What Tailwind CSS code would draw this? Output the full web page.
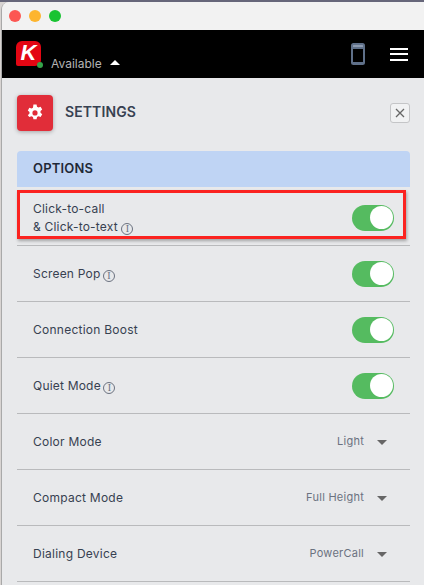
<!DOCTYPE html>
<html>
<head>
<meta charset="utf-8">
<script src="https://cdn.jsdelivr.net/npm/@tailwindcss/browser@4"></script>
</head>
<body class="bg-[#d8d4d2]">
<div class="w-[424px] h-[585px] overflow-hidden font-['Inter',sans-serif] border-t-2 border-[#66667a] ">
<div class="h-full ml-px border-l border-[#a9a9a9] flex flex-col bg-[#e8e9eb] rounded-tl-[8px] overflow-hidden">
  <div class="h-[28px] shrink-0 bg-[#f2f2f2] flex items-center gap-2 pl-[7px]">
    <span class="w-3 h-3 rounded-full bg-[#fc5753]"></span>
    <span class="w-3 h-3 rounded-full bg-[#fdb52f]"></span>
    <span class="w-3 h-3 rounded-full bg-[#19c332]"></span>
  </div>
  <div class="h-[48px] shrink-0 bg-black flex items-center relative pl-[14px] pr-[15px]">
    <div class="relative w-[25px] h-[25px] rounded-[6px] rounded-bl-[2px] bg-[#e30613] flex items-center justify-center -mt-[2px]">
      <span class="text-white font-['Liberation_Sans',sans-serif] font-bold italic text-[22px] leading-none">K</span>
      <span class="absolute -right-[2px] -bottom-[2px] w-[6px] h-[6px] rounded-full bg-[#35a24a] "></span>
    </div>
    <span class="ml-[10px] mt-[20px] text-[12px] leading-none text-[#b4b4b4]">Available</span>
    <svg class="ml-[8px] mt-[16px]" width="10" height="5" viewBox="0 0 10 5"><path d="M5 0 L10 5 L0 5 Z" fill="#fff"/></svg>
    <svg class="ml-auto mr-[25px]" width="14" height="22" viewBox="0 0 14 22"><rect x="0" y="0" width="14" height="22" rx="2.5" fill="#5f7089"/><rect x="2" y="6" width="10" height="13" fill="#000"/><rect x="2" y="2" width="10" height="2" rx="0.5" fill="#8d9bb0"/></svg>
    <div class="flex flex-col gap-[3.5px] mr-[1px]">
      <span class="block w-[18px] h-[2px] bg-white"></span>
      <span class="block w-[18px] h-[2px] bg-white"></span>
      <span class="block w-[18px] h-[2px] bg-white"></span>
    </div>
  </div>
  <div class="flex-1 pl-[15px] pr-[14px] relative">
    <div class="h-[73px] flex items-center relative pb-[3px]">
      <div class="w-9 h-9 rounded-[4px] bg-[#e12d39] shadow-[0_1px_4px_rgba(0,0,0,0.3)] flex items-center justify-center">
        <svg width="18" height="18" viewBox="0 0 16 16"><path fill="#fff" fill-rule="evenodd" d="M6.6 0.5h2.8l.4 2 1.3.7 1.9-.7 1.4 2.4-1.5 1.4v1.4l1.5 1.4-1.4 2.4-1.9-.7-1.3.7-.4 2H6.6l-.4-2-1.3-.7-1.9.7L1.6 9.9l1.5-1.4V7.1L1.6 5.7 3 3.3l1.9.7 1.3-.7zM8 5.6a2.3 2.3 0 1 0 0 4.6 2.3 2.3 0 0 0 0-4.6z"/></svg>
      </div>
      <span class="ml-3 text-[14px] font-semibold text-[#374151] -mt-[3px] tracking-[0.1px]">SETTINGS</span>
      <div class="ml-auto -mt-[1px] w-5 h-5 rounded-[3px] bg-[#f1f2f3] border border-[#c4c5c7] flex items-center justify-center">
        <svg width="10" height="10" viewBox="0 0 10 10"><path d="M1 1 L9 9 M9 1 L1 9" stroke="#666" stroke-width="1.3"/></svg>
      </div>
    </div>
    <div class="h-[36px] rounded-t-[4px] bg-[#bfd4f4] flex items-center pl-4 text-[13px] font-semibold text-[#1f2937] tracking-[0.2px]">OPTIONS</div>

    <div class="h-[59px] border-b border-[#b9babc] flex items-center justify-between pl-4 pr-4 relative">
      <span class="text-[12px] leading-[18px] text-[#374151] mt-[3px] tracking-[0.2px]">Click-to-call<br>&amp; Click-to-text <span class="inline-block align-[-1px] w-3 h-3 rounded-full border border-[#6b7280] text-[10px] leading-[10px] text-center text-[#6b7280] font-['Liberation_Serif',serif]">I</span></span>
      <span class="w-[42px] h-[26px] rounded-full bg-[#55bb60] flex items-center justify-end pr-[1px] mt-[3px]"><span class="w-[23px] h-[23px] rounded-full bg-white"></span></span>
      <div class="absolute left-0 right-[4px] top-[3px] h-[49px] border-[3px] border-[#fb2320] shadow-[1px_2px_3px_rgba(0,0,0,0.3)]"></div>
    </div>

    <div class="h-[56px] border-b border-[#b9babc] flex items-center justify-between pl-4 pr-4">
      <span class="text-[12px] text-[#374151] tracking-[0.2px]">Screen Pop <span class="inline-block align-[-1px] -ml-[1px] w-3 h-3 rounded-full border border-[#6b7280] text-[10px] leading-[10px] text-center text-[#6b7280] font-['Liberation_Serif',serif]">I</span></span>
      <span class="w-[42px] h-[26px] rounded-full bg-[#55bb60] flex items-center justify-end pr-[1px]"><span class="w-[23px] h-[23px] rounded-full bg-white"></span></span>
    </div>
    <div class="h-[56px] border-b border-[#b9babc] flex items-center justify-between pl-4 pr-4">
      <span class="text-[12px] text-[#374151] tracking-[0.25px]">Connection Boost</span>
      <span class="w-[42px] h-[26px] rounded-full bg-[#55bb60] flex items-center justify-end pr-[1px]"><span class="w-[23px] h-[23px] rounded-full bg-white"></span></span>
    </div>
    <div class="h-[56px] border-b border-[#b9babc] flex items-center justify-between pl-4 pr-4">
      <span class="text-[12px] text-[#374151] tracking-[0.2px]">Quiet Mode <span class="inline-block align-[-1px] -ml-[1px] w-3 h-3 rounded-full border border-[#6b7280] text-[10px] leading-[10px] text-center text-[#6b7280] font-['Liberation_Serif',serif]">I</span></span>
      <span class="w-[42px] h-[26px] rounded-full bg-[#55bb60] flex items-center justify-end pr-[1px]"><span class="w-[23px] h-[23px] rounded-full bg-white"></span></span>
    </div>
    <div class="h-[56px] border-b border-[#b9babc] flex items-center pl-4 pr-[23px]">
      <span class="text-[12px] text-[#374151] tracking-[0.25px]">Color Mode</span>
      <span class="ml-auto text-[11px] text-[#6b7280] tracking-[0.25px]">Light</span>
      <svg class="ml-[13px] mt-[1px]" width="10" height="5" viewBox="0 0 10 5"><path d="M0 0 L10 0 L5 5 Z" fill="#666"/></svg>
    </div>
    <div class="h-[56px] border-b border-[#b9babc] flex items-center pl-4 pr-[23px]">
      <span class="text-[12px] text-[#374151] tracking-[0.25px]">Compact Mode</span>
      <span class="ml-auto text-[11px] text-[#6b7280] tracking-[0.25px]">Full Height</span>
      <svg class="ml-[13px] mt-[1px]" width="10" height="5" viewBox="0 0 10 5"><path d="M0 0 L10 0 L5 5 Z" fill="#666"/></svg>
    </div>
    <div class="h-[56px] border-b border-[#b9babc] flex items-center pl-4 pr-[23px]">
      <span class="text-[12px] text-[#374151] tracking-[0.25px]">Dialing Device</span>
      <span class="ml-auto text-[11px] text-[#6b7280] tracking-[0.25px]">PowerCall</span>
      <svg class="ml-[13px] mt-[1px]" width="10" height="5" viewBox="0 0 10 5"><path d="M0 0 L10 0 L5 5 Z" fill="#666"/></svg>
    </div>
  </div>
</div>
</div>
</body>
</html>
